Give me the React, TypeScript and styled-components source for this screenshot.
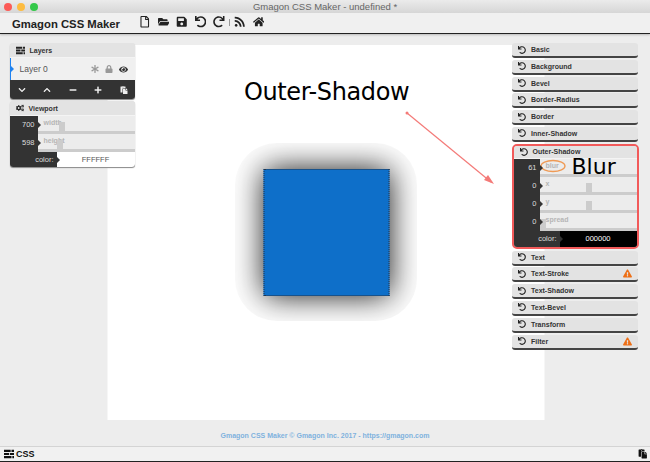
import React from "react";
import styled, { createGlobalStyle } from "styled-components";
import {
  FaRegFile, FaFolderOpen, FaSave, FaUndo, FaRedo, FaRss, FaHome, FaCogs,
  FaAsterisk, FaLock, FaEye, FaChevronDown, FaChevronUp, FaMinus, FaPlus, FaPaste,
  FaExclamationTriangle,
} from "react-icons/fa";

const Global = createGlobalStyle`
  html, body { margin: 0; padding: 0; background: #ededed; }
  body { font-family: "Liberation Sans", Arial, sans-serif; }
`;

const Page = styled.div`
  width: 650px; height: 462px; display: flex; flex-direction: column; overflow: hidden; background: #ededed;
`;
const TitleBar = styled.div`
  height: 13px; flex: none; display: flex; align-items: center; justify-content: center; position: relative;
  background: linear-gradient(#ebebeb, #d6d6d6); font-size: 9.5px; color: #666;
`;
const Lights = styled.div`
  position: absolute; left: 4px; top: 3px; display: flex; gap: 5px;
`;
const Light = styled.span<{ $c: string }>`
  width: 8px; height: 8px; border-radius: 50%; background: ${p => p.$c};
`;
const Toolbar = styled.div`
  height: 21px; flex: none; display: flex; align-items: center; padding-left: 12px; padding-top: 1px; box-sizing: border-box;
  background: #f0f0f0; border-bottom: 1px solid #222; box-shadow: 0 1px 2px #bbb;
`;
const AppName = styled.div`
  font-weight: bold; font-size: 11.3px; color: #222; width: 127px; flex: none;
`;
const Tools = styled.div`
  display: flex; align-items: center; gap: 7.1px; font-size: 11.5px; color: #222; margin-top: -3px;
  svg { display: block; }
`;
const ToolSep = styled.span`
  width: 1px; height: 7px; background: #999; margin: 0 -3px;
`;
const Work = styled.div`
  flex: 1; position: relative; min-height: 0;
  display: flex; flex-direction: column; align-items: center;
`;
const Canvas = styled.div`
  width: 437px; height: 375px; flex: none; margin-top: 11px; background: #fff; position: relative; transform: translateX(0.5px);
`;
const Heading = styled.div`
  position: absolute; left: 137px; top: 33px; font-family: "DejaVu Sans", sans-serif; font-size: 24px; color: #000; white-space: nowrap; letter-spacing: -0.4px;
`;
const Box = styled.div`
  position: absolute; left: 156px; top: 124px; width: 126px; height: 127px; box-sizing: border-box;
  background: #0e6fc9; border: 1px dotted #22374d; box-shadow: 0 0 30px rgba(0, 0, 0, 0.92);
  clip-path: inset(-26px -28px -25px -28px round 42px);
`;
const Footer = styled.div`
  height: 25px; box-sizing: border-box; padding-top: 5px; display: flex; align-items: center; justify-content: center; font-size: 7px; font-weight: bold; color: #7fb2de;
`;
const BottomBar = styled.div`
  height: 16px; flex: none; box-sizing: border-box; display: flex; align-items: center; justify-content: space-between;
  padding: 0 3px 0 4px; background: #f1f1f1; border-top: 1px solid #d4d4d4; border-bottom: 1px solid #222;
  font-size: 9.5px; font-weight: bold; color: #111;
`;
const BottomLeft = styled.div`
  display: flex; align-items: center; gap: 2px; font-size: 9px;
`;
const Floating = styled.div`
  position: absolute; top: 9px; display: flex; flex-direction: column;
`;
const LeftDock = styled(Floating)`
  left: 9.5px; width: 125px; gap: 2px;
`;
const RightDock = styled(Floating)`
  left: 512px; width: 126px; gap: 1.8px;
`;
const Panel = styled.div`
  border-radius: 3px; overflow: hidden; box-shadow: 0 1px 1px #888; background: #e4e4e4;
`;
const Header = styled.div<{ $h?: number }>`
  height: ${p => p.$h ?? 15}px; box-sizing: border-box; display: flex; align-items: center; gap: 5px; padding: 0 5px 0 6px; background: #e3e3e3;
  font-size: 7px; font-weight: bold; color: #333; border-bottom: 1px solid #f4f4f4;
  svg { flex: none; color: #222; font-size: 8px; }
`;
const Collapsed = styled.div`
  height: 13px; box-sizing: content-box; display: flex; align-items: center; gap: 5px; padding: 0 6px 0 6px;
  background: #e3e3e3; border-radius: 3px; border-bottom: 2px solid #444;
  font-size: 7px; font-weight: bold; color: #333;
  svg { flex: none; font-size: 8px; color: #222; }
`;
const Warn = styled(FaExclamationTriangle)`
  margin-left: auto; color: #ee6f16 !important; font-size: 9px !important;
`;
const LayerRow = styled.div`
  height: 22px; display: flex; align-items: center; position: relative; padding: 0 7px 0 9px; gap: 6px; background: #f0f0f0; font-size: 8.5px; color: #555;
  border-left: 1px solid #1e82f0;
  &::before { content: ""; position: absolute; left: 0; top: 8px; border: 3px solid transparent; border-left-color: #1e82f0; }
`;
const LayerName = styled.span`
  flex: 1;
`;
const LayerIcon = styled.span<{ $dark?: boolean }>`
  display: flex; font-size: ${p => (p.$dark ? 9 : 8)}px; color: ${p => (p.$dark ? "#333" : "#999")};
`;
const Actions = styled.div`
  height: 19px; display: flex; align-items: center; justify-content: space-between; padding: 0 7px 0 8px; background: #333; color: #eee; font-size: 8px;
`;
const Row = styled.div`
  height: 18px; display: flex; background: #333;
`;
const RowValue = styled.div<{ $w: number }>`
  width: ${p => p.$w}px; flex: none; box-sizing: border-box; padding-right: 3px; text-align: right; font-size: 7.5px; line-height: 18px; color: #ddd; position: relative;
  &::after { content: ""; position: absolute; right: -3px; top: 6px; border: 3px solid transparent; border-right-width: 0; border-left-color: #333; z-index: 1; }
`;
const Track = styled.div`
  flex: 1; position: relative; background: #ececec; border-bottom: 3px solid #ccc; font-size: 7px; color: #b5b5b5; font-weight: bold; padding-left: 6px; line-height: 14px;
`;
const Handle = styled.span<{ $x: number }>`
  position: absolute; left: ${p => p.$x}px; top: 6px; bottom: 0; width: 6px; background: #ccc;
`;
const ColorRow = styled.div<{ $h: number }>`
  height: ${p => p.$h}px; display: flex; background: #333; font-size: 7.5px; color: #ddd; align-items: stretch;
`;
const ColorLabel = styled.div<{ $w: number }>`
  width: ${p => p.$w}px; flex: none; box-sizing: border-box; padding-right: 3px; display: flex; align-items: center; justify-content: flex-end; position: relative;
  &::after { content: ""; position: absolute; right: -3px; top: 5px; border: 3px solid transparent; border-right-width: 0; border-left-color: #333; z-index: 1; }
`;
const ColorValue = styled.div<{ $bg: string; $fg: string }>`
  flex: 1; display: flex; align-items: center; justify-content: center; background: ${p => p.$bg}; color: ${p => p.$fg};
`;
const Highlight = styled.div`
  border: 2px solid #f25a5a; border-radius: 5px; margin-left: -0.5px; width: 127px; overflow: hidden; background: #e3e3e3; box-sizing: border-box; position: relative;
`;
const BlurLabel = styled.div`
  position: absolute; left: 58px; top: 10px; font-family: "DejaVu Sans", sans-serif; font-size: 22px; line-height: 22px; color: #000;
`;
const Overlay = styled.svg`
  position: absolute; left: 0; top: 0; pointer-events: none;
`;

const ListIcon = ({ size = 9 }: { size?: number }) => (
  <svg width={size} height={size} viewBox="0 0 12 12" fill="currentColor">
    <path d="M0 1h8v2.6H0zM9 1h3v2.6H9zM0 4.7h6v2.6H0zM7 4.7h5v2.6H7zM0 8.4h9V11H0zM10 8.4h2V11h-2z" />
  </svg>
);

const sections1 = ["Basic", "Background", "Bevel", "Border-Radius", "Border", "Inner-Shadow"];
const sections2: [string, boolean][] = [["Text", false], ["Text-Stroke", true], ["Text-Shadow", false], ["Text-Bevel", false], ["Transform", false], ["Filter", true]];
const sliders: [string, string, number][] = [["61", "blur", -10], ["0", "x", 46], ["0", "y", 46], ["0", "spread", 0]];

export default function App() {
  return (
    <Page>
      <Global />
      <TitleBar>
        <Lights>
          <Light $c="#fc5b57" /><Light $c="#fdbc40" /><Light $c="#34c84a" />
        </Lights>
        Gmagon CSS Maker - undefined *
      </TitleBar>
      <Toolbar>
        <AppName>Gmagon CSS Maker</AppName>
        <Tools>
          <FaRegFile /><FaFolderOpen /><FaSave /><FaUndo /><FaRedo /><ToolSep /><FaRss /><FaHome />
        </Tools>
      </Toolbar>
      <Work>
        <Canvas>
          <Heading>Outer-Shadow</Heading>
          <Box />
        </Canvas>
        <Footer>Gmagon CSS Maker © Gmagon Inc. 2017 - https://gmagon.com</Footer>
        <LeftDock>
          <Panel>
            <Header><ListIcon />Layers</Header>
            <LayerRow>
              <LayerName>Layer 0</LayerName>
              <LayerIcon><FaAsterisk /></LayerIcon>
              <LayerIcon><FaLock /></LayerIcon>
              <LayerIcon $dark><FaEye /></LayerIcon>
            </LayerRow>
            <Actions>
              <FaChevronDown /><FaChevronUp /><FaMinus /><FaPlus /><FaPaste />
            </Actions>
          </Panel>
          <Panel>
            <Header><FaCogs />Viewport</Header>
            <Row><RowValue $w={28}>700</RowValue><Track>width<Handle $x={21} /></Track></Row>
            <Row><RowValue $w={28}>598</RowValue><Track>height<Handle $x={19} /></Track></Row>
            <ColorRow $h={15}><ColorLabel $w={47}>color:</ColorLabel><ColorValue $bg="#fff" $fg="#555">FFFFFF</ColorValue></ColorRow>
          </Panel>
        </LeftDock>
        <RightDock>
          {sections1.map(s => (
            <Collapsed key={s}><FaUndo />{s}</Collapsed>
          ))}
          <Highlight>
            <Header $h={13}><FaUndo />Outer-Shadow</Header>
            {sliders.map(([v, l, x]) => (
              <Row key={l}>
                <RowValue $w={26}>{v}</RowValue>
                <Track>{l}{x >= 0 && <Handle $x={x} />}</Track>
              </Row>
            ))}
            <ColorRow $h={16}><ColorLabel $w={46}>color:</ColorLabel><ColorValue $bg="#000" $fg="#fff">000000</ColorValue></ColorRow>
            <BlurLabel>Blur</BlurLabel>
          </Highlight>
          {sections2.map(([s, w]) => (
            <Collapsed key={s}><FaUndo />{s}{w && <Warn />}</Collapsed>
          ))}
        </RightDock>
      </Work>
      <BottomBar>
        <BottomLeft><ListIcon size={10} />CSS</BottomLeft>
        <FaPaste />
      </BottomBar>
      <Overlay width="650" height="462" viewBox="0 0 650 462">
        <ellipse cx="553" cy="166" rx="12" ry="5.5" fill="none" stroke="#ef9a55" strokeWidth="1.3" />
        <line x1="407" y1="113" x2="491" y2="182" stroke="#f47a78" strokeWidth="1.2" />
        <circle cx="407" cy="113" r="1.5" fill="#f47a78" />
        <polygon points="494,184 484,180 488,175" fill="#f47a78" />
      </Overlay>
    </Page>
  );
}
